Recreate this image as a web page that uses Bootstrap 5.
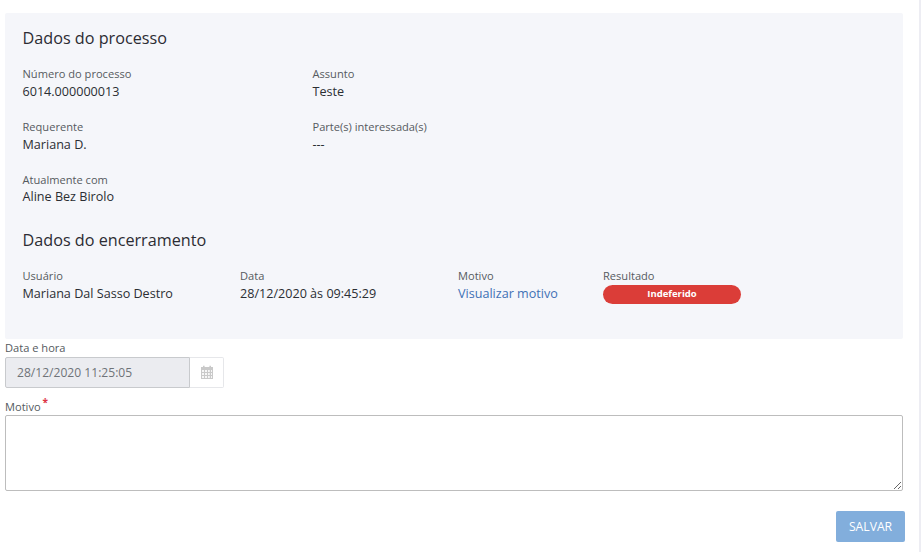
<!DOCTYPE html>
<html lang="pt-BR">
<head>
<meta charset="utf-8">
<title>Dados do processo</title>
<link href="https://cdn.jsdelivr.net/npm/bootstrap@5.3.0/dist/css/bootstrap.min.css" rel="stylesheet">
<style>
html,body{height:552px;overflow:hidden}
body{font-family:"Open Sans",sans-serif;background:#fff;color:#212529;font-size:12px;border-right:2px solid #ededf3}
.sheet{padding:13px 16px 0 5px;width:919px}
.panel{background:#f5f6fa;height:326px;border-radius:2px;padding:13px 18px 0 17.5px}
.ttl{font-size:16.2px;line-height:24px;font-weight:400;color:#2c2c33;margin:0}
.fld-l{font-size:11.1px;line-height:15px;color:#555a60;font-weight:400;display:block}
.fld-v{font-size:12.6px;line-height:17px;color:#2b2e33;margin-top:2px}
.fld-v.tight{margin-top:1px}
.first-grid{display:grid;grid-template-columns:290px 1fr;row-gap:19px;margin-top:16px}
.ttl-second{margin-top:23px}
.second-grid{display:grid;grid-template-columns:217.5px 218px 145px 138px;margin-top:16px}
.motlink{color:#3f71b5;text-decoration:none}
.pill-res{display:block;background:#db3d38;color:#fff;font-size:9.5px;font-weight:700;line-height:18px;height:19px;border-radius:10px;text-align:center;margin-top:2px}
.lbl-date{font-size:11.1px;line-height:15px;color:#555a60;margin:1px 0 2px 0;display:block}
.dt-group{width:219px;height:31px}
.dt-input{height:31px;font-size:12.1px;padding:0 11px;background:#ebecf0;color:#6f7378;border:1px solid #c8cacd;border-radius:2px 0 0 2px;width:185px;line-height:29px}
.dt-addon{width:34px;height:31px;background:#fff;border:1px solid #e6e7ea;border-left:0;border-radius:0 2px 2px 0;padding-bottom:2px}
.lbl-mot{font-size:11.1px;line-height:15px;color:#555a60;margin:11px 0 1px 0;display:block}
.req{color:#dc3545;font-size:10px;font-weight:700;position:relative;top:-5px;line-height:0;margin-left:-1px}
.txt-mot{display:block;width:898px;height:76px;border:1px solid #bdbdbd;border-radius:2px;background:#fff;padding:6px 10px;font-size:12px}
.btn-salvar{background:#82aedc;border:0;color:#fff;font-size:12.2px;width:69px;height:31px;border-radius:2px;padding:0;line-height:31px}
.btn-row{margin-top:20px;width:900px}
</style>
</head>
<body>
<div class="sheet">
  <section class="panel">
    <h2 class="ttl">Dados do processo</h2>
    <div class="first-grid">
      <div><span class="fld-l">Número do processo</span><div class="fld-v">6014.000000013</div></div>
      <div><span class="fld-l">Assunto</span><div class="fld-v">Teste</div></div>
      <div><span class="fld-l">Requerente</span><div class="fld-v">Mariana D.</div></div>
      <div><span class="fld-l">Parte(s) interessada(s)</span><div class="fld-v">---</div></div>
      <div><span class="fld-l">Atualmente com</span><div class="fld-v tight">Aline Bez Birolo</div></div>
    </div>
    <h2 class="ttl ttl-second">Dados do encerramento</h2>
    <div class="second-grid">
      <div><span class="fld-l">Usuário</span><div class="fld-v">Mariana Dal Sasso Destro</div></div>
      <div><span class="fld-l">Data</span><div class="fld-v">28/12/2020 às 09:45:29</div></div>
      <div><span class="fld-l">Motivo</span><div class="fld-v"><a class="motlink" href="#">Visualizar motivo</a></div></div>
      <div><span class="fld-l">Resultado</span><span class="pill-res">Indeferido</span></div>
    </div>
  </section>
  <form>
    <label class="lbl-date" for="dh">Data e hora</label>
    <div class="d-flex dt-group">
      <input id="dh" class="dt-input" type="text" value="28/12/2020 11:25:05" disabled>
      <span class="dt-addon d-flex align-items-center justify-content-center">
        <svg width="14" height="14" viewBox="0 0 14 14" aria-hidden="true"><path fill="#c9c9c9" d="M1 2h2V.8h1.600V2h4.800V.8H11V2h2v12H1z"/><path fill="#f6f6f6" d="M2 5h2v2H2zm3 0h2v2H5zm3 0h1.800v2H8zm3 0h1v2h-1zM2 8h2v2H2zm3 0h2v2H5zm3 0h1.800v2H8zm3 0h1v2h-1zM2 11h2v2H2zm3 0h2v2H5zm3 0h1.800v2H8zm3 0h1v2h-1z"/></svg>
      </span>
    </div>
    <label class="lbl-mot" for="mt">Motivo <span class="req">*</span></label>
    <textarea id="mt" class="txt-mot"></textarea>
    <div class="d-flex justify-content-end btn-row">
      <button type="button" class="btn btn-salvar">SALVAR</button>
    </div>
  </form>
</div>
</body>
</html>
